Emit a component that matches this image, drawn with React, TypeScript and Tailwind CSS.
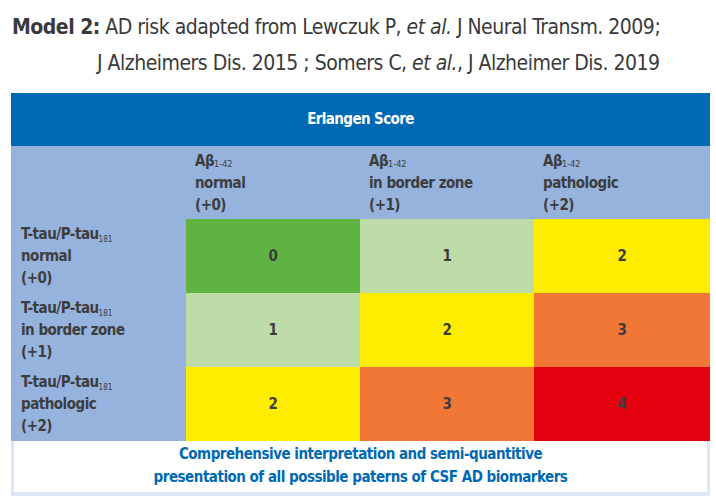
export default function App() {
  const cols = [
    { label: "normal", score: "(+0)" },
    { label: "in border zone", score: "(+1)" },
    { label: "pathologic", score: "(+2)" },
  ];

  const rows = [
    { label: "normal", score: "(+0)", cells: [
      { v: 0, c: "bg-[#5fb343]" },
      { v: 1, c: "bg-[#bedca7]" },
      { v: 2, c: "bg-[#ffed00]" },
    ] },
    { label: "in border zone", score: "(+1)", cells: [
      { v: 1, c: "bg-[#bedca7]" },
      { v: 2, c: "bg-[#ffed00]" },
      { v: 3, c: "bg-[#f07735]" },
    ] },
    { label: "pathologic", score: "(+2)", cells: [
      { v: 2, c: "bg-[#ffed00]" },
      { v: 3, c: "bg-[#f07735]" },
      { v: 4, c: "bg-[#e3000f]" },
    ] },
  ];

  return (
    <div className="w-[716px] h-[497px] bg-white font-['DejaVu_Sans_Condensed','Liberation_Sans',sans-serif] text-[#3d3d3d] overflow-hidden">
      <div className="pt-[9px] pl-[12px] text-[21px] leading-[36px] tracking-[-0.5px] text-[#3a3a3a] whitespace-nowrap">
        <p>
          <span className="font-bold">Model 2:</span> AD risk adapted from Lewczuk P, <i>et al.</i> J Neural Transm. 2009;
        </p>
        <p className="pl-[85px]">
          J Alzheimers Dis. 2015 ; Somers C, <i>et al.</i>, J Alzheimer Dis. 2019
        </p>
      </div>

      <div className="ml-[11px] mt-[12px] w-[699px]">
        <div className="h-[53px] bg-[#0069b4] flex items-center justify-center text-white font-bold text-[15px] tracking-[-0.6px]">
          Erlangen Score
        </div>

        <div className="grid grid-cols-[175px_174px_174px_176px] bg-[#95b3dc] text-[15px] leading-[22px] tracking-[-0.5px] font-bold whitespace-nowrap">
          <div className="h-[73px]" />
          {cols.map((col) => (
            <div key={col.label} className="h-[73px] pt-[4px] pl-[9px]">
              <div>
                Aβ<span className="relative top-[1px] text-[9px] leading-none font-normal tracking-normal">1-42</span>
              </div>
              <div>{col.label}</div>
              <div>{col.score}</div>
            </div>
          ))}

          {rows.map((row) => (
            <>
              <div key={row.label} className="h-[74px] pt-[4px] pl-[10px]">
                <div>
                  T-tau/P-tau<span className="relative top-[3px] text-[8px] leading-none font-normal tracking-normal">181</span>
                </div>
                <div>{row.label}</div>
                <div>{row.score}</div>
              </div>
              {row.cells.map((cell, i) => (
                <div key={row.label + i} className={`h-[74px] flex items-center justify-center ${cell.c}`}>
                  {cell.v}
                </div>
              ))}
            </>
          ))}
        </div>

        <div className="border-x-[3px] border-b-[4px] border-[#dde7f5] bg-white h-[55px] flex flex-col items-center justify-center text-[#0069b4] font-bold text-[15px] leading-[23px] tracking-[-0.5px] pb-[2px] whitespace-nowrap">
          <p>Comprehensive interpretation and semi-quantitive</p>
          <p>presentation of all possible paterns of CSF AD biomarkers</p>
        </div>
      </div>
    </div>
  );
}
